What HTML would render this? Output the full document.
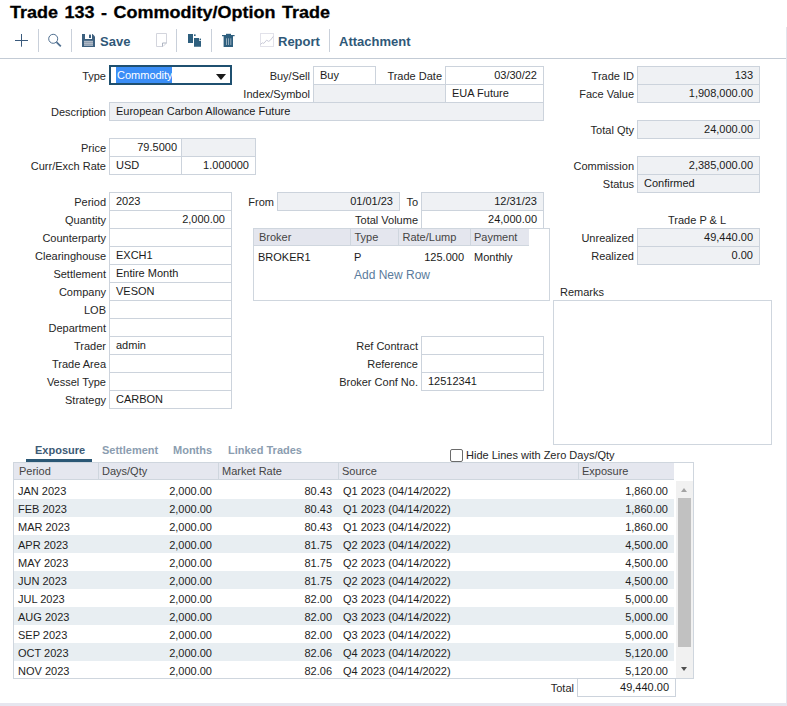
<!DOCTYPE html><html><head><meta charset="utf-8"><style>
*{margin:0;padding:0;box-sizing:border-box}
html,body{width:787px;height:706px;overflow:hidden;background:#fff;font-family:"Liberation Sans",sans-serif;font-size:11px;color:#222}
div,span{position:absolute;white-space:nowrap}
.title{left:10px;top:2px;font-size:18px;font-weight:bold;color:#000;line-height:21px;word-spacing:1.5px;transform:scaleY(0.92);transform-origin:0 16px;-webkit-text-stroke:0.3px #000}
.ic{position:absolute}
.tb{top:33.5px;font-size:13px;font-weight:bold;color:#2f5878;line-height:16px}
.l{color:#262626;text-align:right;padding-top:1px}
.t{color:#262626;line-height:14px}
.f{border:1px solid #ccd3dc;background:#fff;line-height:17px;padding:0 6px;color:#1a1a1a;overflow:hidden}
.g{background:#eff1f4}
.sel{left:109px;top:65px;width:123px;height:20px;border:2px solid #1f5070;background:#fff}
.hl{left:5px;top:0;height:16px;width:56px;background:#3b8ef7;color:#fff;line-height:16px;padding-left:1px}
.arr{left:105px;top:7px;width:0;height:0;border-left:5.5px solid transparent;border-right:5.5px solid transparent;border-top:6px solid #1a1a1a}
.bt{left:253px;top:228px;width:297px;height:73px;border:1px solid #cfd6de}
.bh{top:0;height:17px;background:#e4e6ee;border-bottom:1px solid #cfd6de;line-height:16px;padding-left:5px;color:#444}
.bc{line-height:18px;color:#1a1a1a}
.add{color:#5a7b9c;font-size:12px}
.rem{left:553px;top:300px;width:219px;height:145px;border:1px solid #cfd6de}
.tab{top:442px;font-weight:bold;font-size:11px;color:#8b9db0;line-height:16px}
.tab.act{color:#3c5a75}
.tabu{left:26px;top:459px;width:66px;height:3px;background:#2b5775}
.cb{left:450px;top:449px;width:13px;height:13px;border:1px solid #6b6b6b;border-radius:2px;background:#fff}
.et{left:13px;top:462px;width:681px;height:217px;border:1px solid #cfd6de}
.eh{top:0;height:17px;background:#e5e7ef;border-bottom:1px solid #cfd6de;line-height:16px;padding-left:5px;color:#444}
.er{left:0;width:660px;height:18px;line-height:18px}
.er span{top:1px;color:#1e1e1e}
.sb{left:662px;top:18px;width:17px;height:197px;background:#f1f1f1}
.th{left:2px;top:17px;width:13px;height:149px;background:#c1c1c1}
.up{left:5px;top:6.5px;width:0;height:0;border-left:3.6px solid transparent;border-right:3.6px solid transparent;border-bottom:4.5px solid #a3a3a3}
.dn{left:5px;top:186px;width:0;height:0;border-left:3.6px solid transparent;border-right:3.6px solid transparent;border-top:4.5px solid #505050}
</style></head><body><div class="title">Trade 133 - Commodity/Option Trade</div>
<svg class="ic" style="left:0;top:0" width="787" height="60" viewBox="0 0 787 60">
<g stroke="#3a5a7c" stroke-width="1" fill="none">
<path d="M15 40.5H28M21.5 34V46.7"/>
</g>
<g stroke="#c9d0da" stroke-width="1">
<path d="M38.5 29V52M71.5 29V52M176.5 29V52M211.5 29V52M329.5 29V52"/>
</g>
<g fill="none" stroke="#4f6f90">
<circle cx="53.2" cy="38.8" r="4.5" stroke-width="1"/>
<path d="M56.5 42.2L60.8 46.4" stroke-width="1.8"/>
</g>
<g fill="#3c5f7e">
<path d="M82 34H92.5L95 36.5V47H82Z"/>
</g>
<rect x="85" y="34" width="7" height="5" fill="#fff"/>
<rect x="89" y="34.6" width="2" height="3.4" fill="#3c5f7e"/>
<rect x="84" y="40.8" width="9" height="5" fill="#b9c3cf"/>
<path d="M84 42.3H93M84 44.3H93" stroke="#7d8ea0" stroke-width="0.8"/>
<path d="M156.5 33.5H166.5V43L163 46.5H156.5Z" fill="none" stroke="#d3d5dd" stroke-width="1"/>
<path d="M162.5 46.5V43H166.5" fill="none" stroke="#aeb5c2" stroke-width="1"/>
<g fill="#2e5f7e">
<rect x="188" y="34" width="5" height="9"/>
<rect x="194" y="34.4" width="1.6" height="1.6"/>
<path d="M194 38H199V40.8H201V46.8H194Z"/>
<rect x="199.6" y="38.6" width="1.4" height="1.4"/>
</g>
<g fill="#2e5f7e">
<rect x="222" y="35" width="12.6" height="1.2"/>
<rect x="226" y="33.8" width="5" height="1.5"/>
<rect x="223.6" y="36" width="9.4" height="11"/>
</g>
<path d="M226.5 38.3V45M228.5 38.3V45M230.8 38.3V45" stroke="#9fb4c4" stroke-width="0.9"/>
<rect x="260.5" y="33.5" width="13" height="13" fill="none" stroke="#e2e2ea" stroke-width="1"/>
<polyline points="260.3,44.6 262.3,42.8 263.8,43.4 266.6,40.2 268.7,41.4 270.5,40.1 273.3,36.4" fill="none" stroke="#c9cad8" stroke-width="1"/>
<path d="M0 58.5H786" stroke="#c3cbd5" stroke-width="1"/>
</svg>
<div class="tb" style="left:100px">Save</div>
<div class="tb" style="left:278px">Report</div>
<div class="tb" style="left:339px">Attachment</div>
<div class="l" style="right:681px;top:65px;height:20px;line-height:20px;">Type</div>
<div class="sel"><span class="hl">Commodity</span><div class="arr"></div></div>
<div class="l" style="right:477px;top:66px;height:19px;line-height:19px;">Buy/Sell</div>
<div class="f" style="left:313px;top:66px;width:63px;height:19px;text-align:left;">Buy</div>
<div class="l" style="right:477px;top:84px;height:19px;line-height:19px;">Index/Symbol</div>
<div class="f g" style="left:313px;top:84px;width:133px;height:19px;text-align:left;"></div>
<div class="l" style="right:345px;top:66px;height:19px;line-height:19px;">Trade Date</div>
<div class="f" style="left:445px;top:66px;width:99px;height:19px;text-align:right;">03/30/22</div>
<div class="f" style="left:445px;top:84px;width:99px;height:19px;text-align:left;">EUA Future</div>
<div class="l" style="right:681px;top:102px;height:19px;line-height:19px;">Description</div>
<div class="f g" style="left:109px;top:102px;width:435px;height:19px;text-align:left;">European Carbon Allowance Future</div>
<div class="l" style="right:153px;top:66px;height:19px;line-height:19px;">Trade ID</div>
<div class="f g" style="left:637px;top:66px;width:123px;height:19px;text-align:right;">133</div>
<div class="l" style="right:153px;top:84px;height:19px;line-height:19px;">Face Value</div>
<div class="f g" style="left:637px;top:84px;width:123px;height:19px;text-align:right;">1,908,000.00</div>
<div class="l" style="right:153px;top:120px;height:19px;line-height:19px;">Total Qty</div>
<div class="f g" style="left:637px;top:120px;width:123px;height:19px;text-align:right;">24,000.00</div>
<div class="l" style="right:153px;top:156px;height:19px;line-height:19px;">Commission</div>
<div class="f g" style="left:637px;top:156px;width:123px;height:19px;text-align:right;">2,385,000.00</div>
<div class="l" style="right:153px;top:174px;height:19px;line-height:19px;">Status</div>
<div class="f g" style="left:637px;top:174px;width:123px;height:19px;text-align:left;">Confirmed</div>
<div class="l" style="right:681px;top:138px;height:19px;line-height:19px;">Price</div>
<div class="f" style="left:109px;top:138px;width:73px;height:19px;text-align:right;padding-right:4px">79.5000</div>
<div class="f g" style="left:181px;top:138px;width:75px;height:19px;text-align:left;"></div>
<div class="l" style="right:681px;top:156px;height:19px;line-height:19px;">Curr/Exch Rate</div>
<div class="f" style="left:109px;top:156px;width:73px;height:19px;text-align:left;">USD</div>
<div class="f" style="left:181px;top:156px;width:75px;height:19px;text-align:right;">1.000000</div>
<div class="l" style="right:681px;top:192px;height:19px;line-height:19px;">Period</div>
<div class="f" style="left:109px;top:192px;width:123px;height:19px;text-align:left;">2023</div>
<div class="l" style="right:681px;top:210px;height:19px;line-height:19px;">Quantity</div>
<div class="f" style="left:109px;top:210px;width:123px;height:19px;text-align:right;">2,000.00</div>
<div class="l" style="right:681px;top:228px;height:19px;line-height:19px;">Counterparty</div>
<div class="f" style="left:109px;top:228px;width:123px;height:19px;text-align:left;"></div>
<div class="l" style="right:681px;top:246px;height:19px;line-height:19px;">Clearinghouse</div>
<div class="f" style="left:109px;top:246px;width:123px;height:19px;text-align:left;">EXCH1</div>
<div class="l" style="right:681px;top:264px;height:19px;line-height:19px;">Settlement</div>
<div class="f" style="left:109px;top:264px;width:123px;height:19px;text-align:left;">Entire Month</div>
<div class="l" style="right:681px;top:282px;height:19px;line-height:19px;">Company</div>
<div class="f" style="left:109px;top:282px;width:123px;height:19px;text-align:left;">VESON</div>
<div class="l" style="right:681px;top:300px;height:19px;line-height:19px;">LOB</div>
<div class="f" style="left:109px;top:300px;width:123px;height:19px;text-align:left;"></div>
<div class="l" style="right:681px;top:318px;height:19px;line-height:19px;">Department</div>
<div class="f" style="left:109px;top:318px;width:123px;height:19px;text-align:left;"></div>
<div class="l" style="right:681px;top:336px;height:19px;line-height:19px;">Trader</div>
<div class="f" style="left:109px;top:336px;width:123px;height:19px;text-align:left;">admin</div>
<div class="l" style="right:681px;top:354px;height:19px;line-height:19px;">Trade Area</div>
<div class="f" style="left:109px;top:354px;width:123px;height:19px;text-align:left;"></div>
<div class="l" style="right:681px;top:372px;height:19px;line-height:19px;">Vessel Type</div>
<div class="f" style="left:109px;top:372px;width:123px;height:19px;text-align:left;"></div>
<div class="l" style="right:681px;top:390px;height:19px;line-height:19px;">Strategy</div>
<div class="f" style="left:109px;top:390px;width:123px;height:19px;text-align:left;">CARBON</div>
<div class="l" style="right:513px;top:192px;height:19px;line-height:19px;">From</div>
<div class="f g" style="left:277px;top:192px;width:123px;height:19px;text-align:right;">01/01/23</div>
<div class="l" style="right:369px;top:192px;height:19px;line-height:19px;">To</div>
<div class="f g" style="left:421px;top:192px;width:123px;height:19px;text-align:right;">12/31/23</div>
<div class="l" style="right:369px;top:210px;height:19px;line-height:19px;">Total Volume</div>
<div class="f" style="left:421px;top:210px;width:123px;height:19px;text-align:right;">24,000.00</div>
<div class="bt">
<div class="bh" style="left:0;width:96px">Broker</div>
<div class="bh" style="left:96px;width:48px;border-left:1px solid #cfd6de;padding-left:3.5px">Type</div>
<div class="bh" style="left:144px;width:72px;border-left:1px solid #cfd6de;padding-left:3.5px">Rate/Lump</div>
<div class="bh" style="left:216px;width:59px;border-left:1px solid #cfd6de;padding-left:3px">Payment</div>
<div class="bc" style="left:4px;top:19px">BROKER1</div>
<div class="bc" style="left:100px;top:19px">P</div>
<div class="bc" style="left:144px;width:66px;text-align:right;top:19px">125.000</div>
<div class="bc" style="left:220px;top:19px">Monthly</div>
<div class="bc add" style="left:100px;top:37px">Add New Row</div>
</div>
<div class="l" style="right:369px;top:336px;height:19px;line-height:19px;">Ref Contract</div>
<div class="f" style="left:421px;top:336px;width:123px;height:19px;text-align:left;"></div>
<div class="l" style="right:369px;top:354px;height:19px;line-height:19px;">Reference</div>
<div class="f" style="left:421px;top:354px;width:123px;height:19px;text-align:left;"></div>
<div class="l" style="right:369px;top:372px;height:19px;line-height:19px;">Broker Conf No.</div>
<div class="f" style="left:421px;top:372px;width:123px;height:19px;text-align:left;">12512341</div>
<div class="t" style="left:668px;top:213px;">Trade P &amp; L</div>
<div class="l" style="right:153px;top:228px;height:19px;line-height:19px;">Unrealized</div>
<div class="f g" style="left:637px;top:228px;width:123px;height:19px;text-align:right;">49,440.00</div>
<div class="l" style="right:153px;top:246px;height:19px;line-height:19px;">Realized</div>
<div class="f g" style="left:637px;top:246px;width:123px;height:19px;text-align:right;">0.00</div>
<div class="t" style="left:560px;top:284.5px;">Remarks</div>
<div class="rem"></div>
<div class="tab act" style="left:35px">Exposure</div>
<div class="tabu"></div>
<div class="tab" style="left:102px">Settlement</div>
<div class="tab" style="left:173px">Months</div>
<div class="tab" style="left:228px">Linked Trades</div>
<div class="cb"></div>
<div class="t" style="left:466px;top:448px;">Hide Lines with Zero Days/Qty</div>
<div class="et">
<div class="eh" style="left:0;width:85px">Period</div>
<div class="eh" style="left:84px;width:120px;border-left:1px solid #cfd6de;padding-left:3px">Days/Qty</div>
<div class="eh" style="left:204px;width:120px;border-left:1px solid #cfd6de;padding-left:3px">Market Rate</div>
<div class="eh" style="left:324px;width:240px;border-left:1px solid #cfd6de;padding-left:3px">Source</div>
<div class="eh" style="left:564px;width:96px;border-left:1px solid #cfd6de;padding-left:3px">Exposure</div>
<div class="er" style="top:18px;"><span style="left:4px">JAN 2023</span><span class="r" style="right:462px">2,000.00</span><span class="r" style="right:342px">80.43</span><span style="left:329px">Q1 2023 (04/14/2022)</span><span class="r" style="right:6px">1,860.00</span></div><div class="er" style="top:36px;background:#e8eef2;"><span style="left:4px">FEB 2023</span><span class="r" style="right:462px">2,000.00</span><span class="r" style="right:342px">80.43</span><span style="left:329px">Q1 2023 (04/14/2022)</span><span class="r" style="right:6px">1,860.00</span></div><div class="er" style="top:54px;"><span style="left:4px">MAR 2023</span><span class="r" style="right:462px">2,000.00</span><span class="r" style="right:342px">80.43</span><span style="left:329px">Q1 2023 (04/14/2022)</span><span class="r" style="right:6px">1,860.00</span></div><div class="er" style="top:72px;background:#e8eef2;"><span style="left:4px">APR 2023</span><span class="r" style="right:462px">2,000.00</span><span class="r" style="right:342px">81.75</span><span style="left:329px">Q2 2023 (04/14/2022)</span><span class="r" style="right:6px">4,500.00</span></div><div class="er" style="top:90px;"><span style="left:4px">MAY 2023</span><span class="r" style="right:462px">2,000.00</span><span class="r" style="right:342px">81.75</span><span style="left:329px">Q2 2023 (04/14/2022)</span><span class="r" style="right:6px">4,500.00</span></div><div class="er" style="top:108px;background:#e8eef2;"><span style="left:4px">JUN 2023</span><span class="r" style="right:462px">2,000.00</span><span class="r" style="right:342px">81.75</span><span style="left:329px">Q2 2023 (04/14/2022)</span><span class="r" style="right:6px">4,500.00</span></div><div class="er" style="top:126px;"><span style="left:4px">JUL 2023</span><span class="r" style="right:462px">2,000.00</span><span class="r" style="right:342px">82.00</span><span style="left:329px">Q3 2023 (04/14/2022)</span><span class="r" style="right:6px">5,000.00</span></div><div class="er" style="top:144px;background:#e8eef2;"><span style="left:4px">AUG 2023</span><span class="r" style="right:462px">2,000.00</span><span class="r" style="right:342px">82.00</span><span style="left:329px">Q3 2023 (04/14/2022)</span><span class="r" style="right:6px">5,000.00</span></div><div class="er" style="top:162px;"><span style="left:4px">SEP 2023</span><span class="r" style="right:462px">2,000.00</span><span class="r" style="right:342px">82.00</span><span style="left:329px">Q3 2023 (04/14/2022)</span><span class="r" style="right:6px">5,000.00</span></div><div class="er" style="top:180px;background:#e8eef2;"><span style="left:4px">OCT 2023</span><span class="r" style="right:462px">2,000.00</span><span class="r" style="right:342px">82.06</span><span style="left:329px">Q4 2023 (04/14/2022)</span><span class="r" style="right:6px">5,120.00</span></div><div class="er" style="top:198px;"><span style="left:4px">NOV 2023</span><span class="r" style="right:462px">2,000.00</span><span class="r" style="right:342px">82.06</span><span style="left:329px">Q4 2023 (04/14/2022)</span><span class="r" style="right:6px">5,120.00</span></div>
<div class="sb"><div class="up"></div><div class="th"></div><div class="dn"></div></div>
</div>
<div class="l" style="right:213px;top:678px;height:19px;line-height:19px;">Total</div>
<div class="f" style="left:577px;top:678px;width:99px;height:19px;text-align:right;">49,440.00</div>
<div style="position:absolute;left:786px;top:27px;width:1px;height:679px;background:#e4e4ec"></div>
<div style="position:absolute;left:0;top:703px;width:787px;height:3px;background:#e6e6ef"></div></body></html>
